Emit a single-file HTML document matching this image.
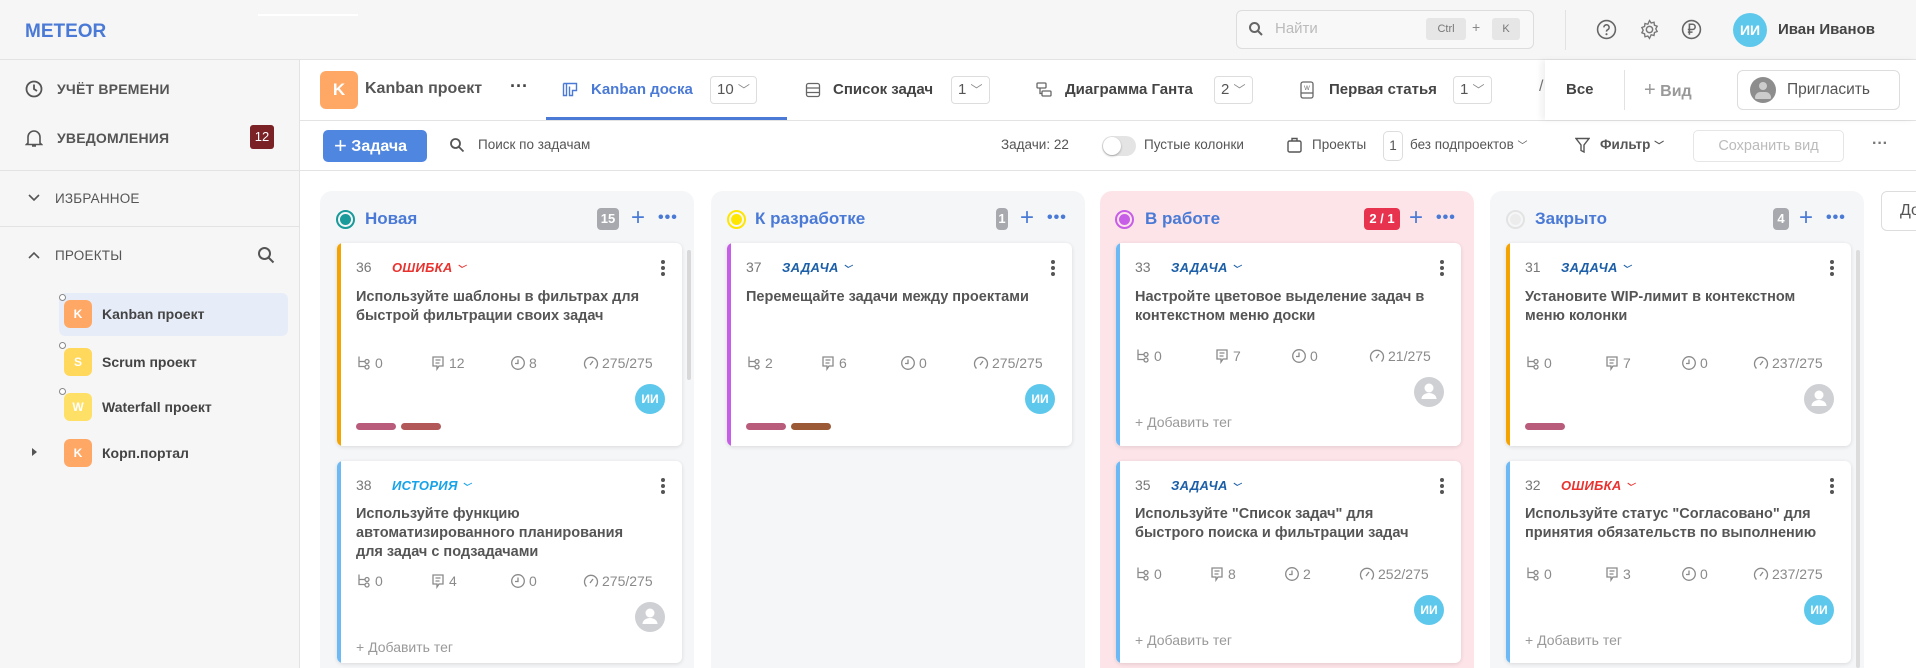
<!DOCTYPE html>
<html><head><meta charset="utf-8"><style>
*{box-sizing:border-box;margin:0;padding:0}
body{width:1916px;height:668px;overflow:hidden;background:#fff;font-family:"Liberation Sans","Noto Sans CJK SC",sans-serif;color:#555;position:relative}
.a{position:absolute}
.top{left:0;top:0;width:1916px;height:60px;background:#f6f6f6;border-bottom:1px solid #e3e3e3}
.side{left:0;top:60px;width:300px;height:608px;background:#f6f6f6;border-right:1px solid #e3e3e3}
.si{font-size:14px;color:#555;font-weight:bold;letter-spacing:.2px}
.pi{font-size:14px;color:#444;font-weight:bold}
.pav{width:28px;height:28px;border-radius:6px;color:#fff;font-size:12px;font-weight:bold;text-align:center;line-height:28px}
.col{top:191px;width:374px;height:477px;border-radius:12px 12px 0 0;background:#f5f6f8}
.card{background:#fff;border-radius:6px;box-shadow:0 1px 4px rgba(0,0,0,.12);width:345px;overflow:hidden}
.card .bar{left:0;top:0;width:4px;height:100%}
.id{font-size:14px;color:#777;left:19px}
.typ{font-size:13px;font-style:italic;font-weight:bold;letter-spacing:.3px}
.ttl{left:19px;width:290px;font-size:14.5px;line-height:19px;color:#555;font-weight:bold}
.st{font-size:14px;color:#8a8a8a;display:flex;align-items:center;gap:3px}
.st svg{width:16px;height:16px}
.av{width:30px;height:30px;border-radius:50%;background:#5ec8ec;color:#fff;font-weight:bold;font-size:12px;text-align:center;line-height:30px;left:298px}
.av.g{background:#cfd0d4}
.tag{height:7px;width:40px;border-radius:4px;top:0}
.add{left:19px;font-size:14px;color:#999}
.keb{left:324px;width:4px}
.keb i{display:block;width:4px;height:4px;border-radius:50%;background:#555;margin-bottom:2px}
.hd{font-size:17px;font-weight:bold;color:#4a7ad6}
.cnt{height:22px;border-radius:4px;color:#fff;font-size:13px;font-weight:bold;text-align:center;line-height:22px;background:#a7a9ae}
.plus{font-size:24px;color:#4a7ad6;line-height:22px}
.dots{font-size:16px;color:#4a7ad6;font-weight:bold;letter-spacing:1px}
.tab{font-size:15px;color:#444;font-weight:bold}
.cb{border:1px solid #ddd;border-radius:4px;height:28px;font-size:15px;color:#555;padding:0 6px;line-height:26px}
.tb{font-size:13.5px;color:#555}
</style></head><body>
<div class="a top"></div>
<div class="a" style="left:258px;top:14px;width:100px;height:2px;background:#fff"></div>
<div class="a" style="left:25px;top:21px;font-size:19px;font-weight:bold;color:#4a7ad6">METEOR</div>
<div class="a" style="left:1236px;top:10px;width:298px;height:39px;border:1px solid #ddd;border-radius:6px;background:#f8f8f8"></div>
<svg class="a" style="left:1248px;top:21px" width="16" height="16" viewBox="0 0 16 16"><circle cx="6.5" cy="6.5" r="4.5" fill="none" stroke="#666" stroke-width="2"/><path d="M10 10l4 4" stroke="#666" stroke-width="2"/></svg>
<div class="a" style="left:1275px;top:20px;font-size:15px;color:#bbb">Найти</div>
<div class="a" style="left:1426px;top:18px;width:40px;height:22px;background:#e6e6e6;border-radius:3px;font-size:11px;color:#777;text-align:center;line-height:22px">Ctrl</div>
<div class="a" style="left:1472px;top:19px;font-size:14px;color:#888">+</div>
<div class="a" style="left:1492px;top:18px;width:28px;height:22px;background:#e6e6e6;border-radius:3px;font-size:11px;color:#777;text-align:center;line-height:22px">K</div>
<div class="a" style="left:1565px;top:10px;width:1px;height:40px;background:#e2e2e2"></div>
<svg class="a" style="left:1596px;top:19px" width="21" height="21" viewBox="0 0 20 20"><circle cx="10" cy="10" r="8.5" fill="none" stroke="#666" stroke-width="1.5"/><path d="M7.5 8a2.5 2.5 0 1 1 3.5 2.3c-.8.4-1 1-1 1.7" fill="none" stroke="#666" stroke-width="1.5"/><circle cx="10" cy="14.5" r="1" fill="#666"/></svg>
<svg class="a" style="left:1639px;top:19px" width="21" height="21" viewBox="0 0 20 20"><circle cx="10" cy="10" r="3" fill="none" stroke="#777" stroke-width="1.4"/><path d="M10 1.5l1.6 2.3 2.7-.7.4 2.8 2.6 1-1.3 2.5 1.3 2.5-2.6 1-.4 2.8-2.7-.7L10 18.5l-1.6-2.3-2.7.7-.4-2.8-2.6-1L4 10.6 2.7 8.1l2.6-1 .4-2.8 2.7.7z" fill="none" stroke="#777" stroke-width="1.3"/></svg>
<svg class="a" style="left:1681px;top:19px" width="21" height="21" viewBox="0 0 20 20"><circle cx="10" cy="10" r="8.5" fill="none" stroke="#666" stroke-width="1.5"/><path d="M8 15V5h3a2.5 2.5 0 0 1 0 5H6.5M6.5 12.5H11" fill="none" stroke="#666" stroke-width="1.5"/></svg>
<div class="a" style="left:1733px;top:13px;width:34px;height:34px;border-radius:50%;background:#5ec8ec;color:#fff;font-weight:bold;font-size:14px;text-align:center;line-height:34px">ИИ</div>
<div class="a" style="left:1778px;top:21px;font-size:15px;font-weight:bold;color:#444">Иван Иванов</div>

<div class="a side"></div>
<svg class="a" style="left:25px;top:80px" width="18" height="18" viewBox="0 0 18 18"><circle cx="9" cy="9" r="7.5" fill="none" stroke="#555" stroke-width="1.8"/><path d="M9 4.5V9l3 2" fill="none" stroke="#555" stroke-width="1.8"/></svg>
<div class="a si" style="left:57px;top:81px">УЧЁТ ВРЕМЕНИ</div>
<svg class="a" style="left:25px;top:128px" width="18" height="20" viewBox="0 0 18 20"><path d="M3 15V9a6 6 0 0 1 12 0v6l1.5 1.5h-15z M7 18h4" fill="none" stroke="#555" stroke-width="1.6"/></svg>
<div class="a si" style="left:57px;top:130px">УВЕДОМЛЕНИЯ</div>
<div class="a" style="left:250px;top:125px;width:24px;height:24px;background:#7b2226;border-radius:3px;color:#fff;font-size:13px;text-align:center;line-height:24px">12</div>
<div class="a" style="left:0;top:170px;width:300px;height:1px;background:#e3e3e3"></div>
<svg class="a" style="left:28px;top:193px" width="12" height="10" viewBox="0 0 12 10"><path d="M1 2l5 5 5-5" fill="none" stroke="#555" stroke-width="1.6"/></svg>
<div class="a si" style="left:55px;top:191px;font-weight:normal;font-size:13.5px">ИЗБРАННОЕ</div>
<div class="a" style="left:0;top:226px;width:300px;height:1px;background:#e3e3e3"></div>
<svg class="a" style="left:28px;top:250px" width="12" height="10" viewBox="0 0 12 10"><path d="M1 8l5-5 5 5" fill="none" stroke="#555" stroke-width="1.6"/></svg>
<div class="a si" style="left:55px;top:248px;font-weight:normal;font-size:13.5px">ПРОЕКТЫ</div>
<svg class="a" style="left:257px;top:246px" width="18" height="18" viewBox="0 0 18 18"><circle cx="7.5" cy="7.5" r="5.5" fill="none" stroke="#555" stroke-width="2"/><path d="M11.5 11.5l5 5" stroke="#555" stroke-width="2"/></svg>
<div class="a" style="left:59px;top:293px;width:229px;height:43px;background:#e7edf8;border-radius:6px"></div>
<div class="a pav" style="left:64px;top:300px;background:#ffa866">K</div><div class="a" style="left:59px;top:294px;width:7px;height:7px;border:1px solid #888;border-radius:50%;background:#fff"></div>
<div class="a pi" style="left:102px;top:306px">Kanban проект</div>
<div class="a pav" style="left:64px;top:348px;background:#ffd85c">S</div><div class="a" style="left:59px;top:342px;width:7px;height:7px;border:1px solid #888;border-radius:50%;background:#fff"></div>
<div class="a pi" style="left:102px;top:354px">Scrum проект</div>
<div class="a pav" style="left:64px;top:393px;background:#ffe066">W</div><div class="a" style="left:59px;top:388px;width:7px;height:7px;border:1px solid #888;border-radius:50%;background:#fff"></div>
<div class="a pi" style="left:102px;top:399px">Waterfall проект</div>
<div class="a" style="left:32px;top:448px;width:0;height:0;border-left:5px solid #555;border-top:4px solid transparent;border-bottom:4px solid transparent"></div>
<div class="a pav" style="left:64px;top:439px;background:#ffa866">K</div>
<div class="a pi" style="left:102px;top:445px">Корп.портал</div>

<div class="a" style="left:300px;top:120px;width:1616px;height:1px;background:#e3e3e3"></div>
<div class="a" style="left:320px;top:71px;width:38px;height:38px;border-radius:6px;background:#ffa866;color:#fff;font-weight:bold;font-size:17px;text-align:center;line-height:38px">K</div>
<div class="a tab" style="left:365px;top:80px;font-size:16px;color:#555">Kanban проект</div>
<div class="a" style="left:510px;top:76px;font-size:18px;font-weight:bold;color:#444">···</div>
<svg class="a" style="left:562px;top:82px" width="16" height="16" viewBox="0 0 16 16"><path d="M1.5 1.5h13v7h-4v5h-3v-9M1.5 1.5v12h3v-12" fill="none" stroke="#4a7ad6" stroke-width="1.4"/></svg>
<div class="a tab" style="left:591px;top:81px;color:#4a7ad6">Kanban доска</div>
<div class="a cb" style="left:710px;top:76px">10 <span style="color:#888;font-size:12px">﹀</span></div>
<div class="a" style="left:546px;top:117px;width:241px;height:3px;background:#4a7ad6"></div>
<svg class="a" style="left:805px;top:82px" width="16" height="16" viewBox="0 0 16 16"><rect x="1.5" y="1.5" width="13" height="13" rx="2" fill="none" stroke="#666" stroke-width="1.3"/><path d="M1.5 6h13M1.5 10.5h13" stroke="#666" stroke-width="1.3"/></svg>
<div class="a tab" style="left:833px;top:81px">Список задач</div>
<div class="a cb" style="left:951px;top:76px">1 <span style="color:#888;font-size:12px">﹀</span></div>
<svg class="a" style="left:1036px;top:82px" width="17" height="16" viewBox="0 0 17 16"><rect x="1" y="1" width="9" height="5" rx="1" fill="none" stroke="#666" stroke-width="1.3"/><rect x="6" y="9" width="9" height="5" rx="1" fill="none" stroke="#666" stroke-width="1.3"/><path d="M4 6v5.5h2" fill="none" stroke="#666" stroke-width="1.3"/></svg>
<div class="a tab" style="left:1065px;top:81px">Диаграмма Ганта</div>
<div class="a cb" style="left:1214px;top:76px">2 <span style="color:#888;font-size:12px">﹀</span></div>
<svg class="a" style="left:1300px;top:81px" width="14" height="18" viewBox="0 0 14 18"><rect x="1" y="1" width="12" height="16" rx="2" fill="none" stroke="#666" stroke-width="1.3"/><path d="M1 12h12" stroke="#666" stroke-width="1.3"/><text x="7" y="9" font-size="6" text-anchor="middle" fill="#666">W</text></svg>
<div class="a tab" style="left:1329px;top:81px">Первая статья</div>
<div class="a cb" style="left:1453px;top:76px">1 <span style="color:#888;font-size:12px">﹀</span></div>
<div class="a" style="left:1539px;top:78px;font-size:16px;color:#777">/</div>
<div class="a" style="left:1545px;top:60px;width:371px;height:60px;background:#fff;box-shadow:-4px 0 6px rgba(0,0,0,.06)"></div>
<div class="a tab" style="left:1566px;top:81px">Все</div>
<div class="a" style="left:1624px;top:70px;width:1px;height:40px;background:#e2e2e2"></div>
<div class="a tab" style="left:1644px;top:79px;color:#999;font-size:16px"><span style="font-size:20px;font-weight:normal">+</span> Вид</div>
<div class="a" style="left:1737px;top:70px;width:163px;height:40px;border:1px solid #ddd;border-radius:6px"></div>
<div class="a" style="left:1750px;top:77px;width:26px;height:26px;border-radius:50%;background:#8d8d8d"></div>
<div class="a" style="left:1759px;top:82px;width:8px;height:8px;border-radius:50%;background:#ccc"></div>
<div class="a" style="left:1755px;top:92px;width:16px;height:7px;border-radius:8px 8px 2px 2px;background:#ccc"></div>
<div class="a" style="left:1787px;top:81px;font-size:15.5px;color:#555">Пригласить</div>

<div class="a" style="left:300px;top:170px;width:1616px;height:1px;background:#e3e3e3"></div>
<div class="a" style="left:323px;top:130px;width:104px;height:32px;background:#4f86e0;border-radius:5px;color:#fff;font-weight:bold;font-size:16px;line-height:32px;padding-left:11px"><span style="font-size:22px;font-weight:normal;vertical-align:-2px">+</span> Задача</div>
<svg class="a" style="left:449px;top:137px" width="16" height="16" viewBox="0 0 16 16"><circle cx="6.5" cy="6.5" r="4.5" fill="none" stroke="#555" stroke-width="1.8"/><path d="M10 10l4.5 4.5" stroke="#555" stroke-width="1.8"/></svg>
<div class="a tb" style="left:478px;top:137px">Поиск по задачам</div>
<div class="a tb" style="left:1001px;top:137px">Задачи: 22</div>
<div class="a" style="left:1102px;top:136px;width:34px;height:20px;border-radius:10px;background:#e4e4e4"></div>
<div class="a" style="left:1103px;top:137px;width:18px;height:18px;border-radius:50%;background:#fff;box-shadow:0 1px 2px rgba(0,0,0,.3)"></div>
<div class="a tb" style="left:1144px;top:137px">Пустые колонки</div>
<svg class="a" style="left:1287px;top:137px" width="15" height="16" viewBox="0 0 15 16"><rect x="1" y="4" width="13" height="11" rx="1.5" fill="none" stroke="#555" stroke-width="1.4"/><path d="M5 4V1.5h5V4" fill="none" stroke="#555" stroke-width="1.4"/></svg>
<div class="a tb" style="left:1312px;top:137px">Проекты</div>
<div class="a" style="left:1383px;top:131px;width:20px;height:30px;border:1px solid #ddd;border-radius:5px;font-size:13.5px;text-align:center;line-height:28px">1</div>
<div class="a tb" style="left:1410px;top:137px">без подпроектов <span style="font-size:10px">﹀</span></div>
<svg class="a" style="left:1575px;top:137px" width="15" height="17" viewBox="0 0 15 17"><path d="M1 1.5h13l-5 6.5v7l-3-1.5V8z" fill="none" stroke="#555" stroke-width="1.4"/></svg>
<div class="a tb" style="left:1600px;top:137px;font-weight:bold">Фильтр <span style="font-size:10px">﹀</span></div>
<div class="a" style="left:1693px;top:130px;width:151px;height:32px;border:1px solid #e6e6e6;border-radius:5px;color:#bbb;font-size:14.5px;text-align:center;line-height:30px">Сохранить вид</div>
<div class="a" style="left:1872px;top:135px;font-size:16px;color:#777;font-weight:bold">···</div>

<div class="a col" style="left:320px"></div>
<div class="a col" style="left:711px"></div>
<div class="a col" style="left:1100px;background:#fde4e8"></div>
<div class="a col" style="left:1490px"></div>
<div class="a" style="left:1881px;top:191px;width:50px;height:40px;border:1px solid #ddd;border-radius:6px;background:#fff"></div>
<div class="a" style="left:1900px;top:202px;font-size:16px;color:#555">До</div>

<div class="a" style="left:336px;top:210px;width:19px;height:19px;border-radius:50%;border:2px solid #1a9a9a"><div style="margin:2px;width:11px;height:11px;border-radius:50%;background:#1a9a9a"></div></div>
<div class="a hd" style="left:365px;top:209px">Новая</div>
<div class="a cnt" style="left:597px;top:208px;width:22px">15</div>
<div class="a plus" style="left:631px;top:207px">+</div>
<div class="a dots" style="left:658px;top:209px">•••</div>

<div class="a" style="left:727px;top:210px;width:19px;height:19px;border-radius:50%;border:2px solid #ffe600"><div style="margin:2px;width:11px;height:11px;border-radius:50%;background:#ffe600"></div></div>
<div class="a hd" style="left:755px;top:209px">К разработке</div>
<div class="a cnt" style="left:996px;top:208px;width:12px">1</div>
<div class="a plus" style="left:1020px;top:207px">+</div>
<div class="a dots" style="left:1047px;top:209px">•••</div>

<div class="a" style="left:1115px;top:210px;width:19px;height:19px;border-radius:50%;border:2px solid #c75ee8"><div style="margin:2px;width:11px;height:11px;border-radius:50%;background:#c75ee8"></div></div>
<div class="a hd" style="left:1145px;top:209px">В работе</div>
<div class="a cnt" style="left:1364px;top:208px;width:36px;background:#e8334f">2 / 1</div>
<div class="a plus" style="left:1409px;top:207px">+</div>
<div class="a dots" style="left:1436px;top:209px">•••</div>

<div class="a" style="left:1506px;top:210px;width:19px;height:19px;border-radius:50%;border:2px solid #e3e3e3"><div style="margin:2px;width:11px;height:11px;border-radius:50%;background:#ececec"></div></div>
<div class="a hd" style="left:1535px;top:209px">Закрыто</div>
<div class="a cnt" style="left:1773px;top:208px;width:16px">4</div>
<div class="a plus" style="left:1799px;top:207px">+</div>
<div class="a dots" style="left:1826px;top:209px">•••</div>

<div class="a" style="left:687px;top:250px;width:4px;height:130px;background:#d8d8d8;border-radius:2px"></div>
<div class="a" style="left:1856px;top:250px;width:4px;height:418px;background:#dcdcdc;border-radius:2px"></div>

<svg width="0" height="0" style="position:absolute">
<defs>
<symbol id="sub" viewBox="0 0 16 16"><path d="M3 1.5v10h6M3 6.5h6" fill="none" stroke="#8a8a8a" stroke-width="1.3"/><circle cx="11" cy="6.5" r="2" fill="none" stroke="#8a8a8a" stroke-width="1.3"/><circle cx="11" cy="12" r="2" fill="none" stroke="#8a8a8a" stroke-width="1.3"/></symbol>
<symbol id="com" viewBox="0 0 16 16"><path d="M3 2h10v9H9l-2 3v-3H3z" fill="none" stroke="#8a8a8a" stroke-width="1.3"/><path d="M5.5 5h5M5.5 8h4" stroke="#8a8a8a" stroke-width="1.2"/></symbol>
<symbol id="clk" viewBox="0 0 16 16"><circle cx="8" cy="8" r="6.3" fill="none" stroke="#8a8a8a" stroke-width="1.3"/><path d="M8 4.5V8.5H5" fill="none" stroke="#8a8a8a" stroke-width="1.3"/></symbol>
<symbol id="gau" viewBox="0 0 16 16"><path d="M3.5 13.5A6.5 6.5 0 1 1 12.5 13.5" fill="none" stroke="#8a8a8a" stroke-width="1.3"/><path d="M7 10l3-4" stroke="#8a8a8a" stroke-width="1.3"/></symbol>
<symbol id="usr" viewBox="0 0 30 30"><circle cx="15" cy="11" r="4.5" fill="#fff"/><path d="M7.5 22a7.5 6 0 0 1 15 0z" fill="#fff"/></symbol>
</defs></svg>

<div class="a card" style="left:337px;top:243px;height:203px">
 <div class="a bar" style="background:#f5a300"></div>
 <div class="a id" style="top:16px">36</div>
 <div class="a typ" style="left:55px;top:17px;color:#e8332f">ОШИБКА <span style="font-size:9px">﹀</span></div>
 <div class="a keb" style="top:17px"><i></i><i></i><i></i></div>
 <div class="a ttl" style="top:45px">Используйте шаблоны в фильтрах для быстрой фильтрации своих задач</div>
 <div class="a st" style="left:19px;top:112px"><svg><use href="#sub"/></svg>0</div>
 <div class="a st" style="left:93px;top:112px"><svg><use href="#com"/></svg>12</div>
 <div class="a st" style="left:173px;top:112px"><svg><use href="#clk"/></svg>8</div>
 <div class="a st" style="left:246px;top:112px"><svg><use href="#gau"/></svg>275/275</div>
 <div class="a av" style="top:141px">ИИ</div>
 <div class="a tag" style="left:19px;top:180px;background:#b95c7c"></div>
 <div class="a tag" style="left:64px;top:180px;background:#b35858"></div>
</div>
<div class="a card" style="left:337px;top:461px;height:202px">
 <div class="a bar" style="background:#6cb9f5"></div>
 <div class="a id" style="top:16px">38</div>
 <div class="a typ" style="left:55px;top:17px;color:#16a3e8">ИСТОРИЯ <span style="font-size:9px">﹀</span></div>
 <div class="a keb" style="top:17px"><i></i><i></i><i></i></div>
 <div class="a ttl" style="top:44px">Используйте функцию автоматизированного планирования для задач с подзадачами</div>
 <div class="a st" style="left:19px;top:112px"><svg><use href="#sub"/></svg>0</div>
 <div class="a st" style="left:93px;top:112px"><svg><use href="#com"/></svg>4</div>
 <div class="a st" style="left:173px;top:112px"><svg><use href="#clk"/></svg>0</div>
 <div class="a st" style="left:246px;top:112px"><svg><use href="#gau"/></svg>275/275</div>
 <div class="a av g" style="top:141px"><svg width="30" height="30"><use href="#usr"/></svg></div>
 <div class="a add" style="top:178px">+ Добавить тег</div>
</div>
<div class="a card" style="left:727px;top:243px;height:203px">
 <div class="a bar" style="background:#c75ee8"></div>
 <div class="a id" style="top:16px">37</div>
 <div class="a typ" style="left:55px;top:17px;color:#1c5fa8">ЗАДАЧА <span style="font-size:9px">﹀</span></div>
 <div class="a keb" style="top:17px"><i></i><i></i><i></i></div>
 <div class="a ttl" style="top:45px;width:310px">Перемещайте задачи между проектами</div>
 <div class="a st" style="left:19px;top:112px"><svg><use href="#sub"/></svg>2</div>
 <div class="a st" style="left:93px;top:112px"><svg><use href="#com"/></svg>6</div>
 <div class="a st" style="left:173px;top:112px"><svg><use href="#clk"/></svg>0</div>
 <div class="a st" style="left:246px;top:112px"><svg><use href="#gau"/></svg>275/275</div>
 <div class="a av" style="top:141px">ИИ</div>
 <div class="a tag" style="left:19px;top:180px;background:#b95c7c"></div>
 <div class="a tag" style="left:64px;top:180px;background:#9b5a35"></div>
</div>
<div class="a card" style="left:1116px;top:243px;height:203px">
 <div class="a bar" style="background:#6cb9f5"></div>
 <div class="a id" style="top:16px">33</div>
 <div class="a typ" style="left:55px;top:17px;color:#1c5fa8">ЗАДАЧА <span style="font-size:9px">﹀</span></div>
 <div class="a keb" style="top:17px"><i></i><i></i><i></i></div>
 <div class="a ttl" style="top:45px">Настройте цветовое выделение задач в контекстном меню доски</div>
 <div class="a st" style="left:19px;top:105px"><svg><use href="#sub"/></svg>0</div>
 <div class="a st" style="left:98px;top:105px"><svg><use href="#com"/></svg>7</div>
 <div class="a st" style="left:175px;top:105px"><svg><use href="#clk"/></svg>0</div>
 <div class="a st" style="left:253px;top:105px"><svg><use href="#gau"/></svg>21/275</div>
 <div class="a av g" style="top:134px"><svg width="30" height="30"><use href="#usr"/></svg></div>
 <div class="a add" style="top:171px">+ Добавить тег</div>
</div>
<div class="a card" style="left:1116px;top:461px;height:202px">
 <div class="a bar" style="background:#6cb9f5"></div>
 <div class="a id" style="top:16px">35</div>
 <div class="a typ" style="left:55px;top:17px;color:#1c5fa8">ЗАДАЧА <span style="font-size:9px">﹀</span></div>
 <div class="a keb" style="top:17px"><i></i><i></i><i></i></div>
 <div class="a ttl" style="top:44px">Используйте "Список задач" для быстрого поиска и фильтрации задач</div>
 <div class="a st" style="left:19px;top:105px"><svg><use href="#sub"/></svg>0</div>
 <div class="a st" style="left:93px;top:105px"><svg><use href="#com"/></svg>8</div>
 <div class="a st" style="left:168px;top:105px"><svg><use href="#clk"/></svg>2</div>
 <div class="a st" style="left:243px;top:105px"><svg><use href="#gau"/></svg>252/275</div>
 <div class="a av" style="top:134px">ИИ</div>
 <div class="a add" style="top:171px">+ Добавить тег</div>
</div>
<div class="a card" style="left:1506px;top:243px;height:203px">
 <div class="a bar" style="background:#f5a300"></div>
 <div class="a id" style="top:16px">31</div>
 <div class="a typ" style="left:55px;top:17px;color:#1c5fa8">ЗАДАЧА <span style="font-size:9px">﹀</span></div>
 <div class="a keb" style="top:17px"><i></i><i></i><i></i></div>
 <div class="a ttl" style="top:45px">Установите WIP-лимит в контекстном меню колонки</div>
 <div class="a st" style="left:19px;top:112px"><svg><use href="#sub"/></svg>0</div>
 <div class="a st" style="left:98px;top:112px"><svg><use href="#com"/></svg>7</div>
 <div class="a st" style="left:175px;top:112px"><svg><use href="#clk"/></svg>0</div>
 <div class="a st" style="left:247px;top:112px"><svg><use href="#gau"/></svg>237/275</div>
 <div class="a av g" style="top:141px"><svg width="30" height="30"><use href="#usr"/></svg></div>
 <div class="a tag" style="left:19px;top:180px;background:#b95c7c"></div>
</div>
<div class="a card" style="left:1506px;top:461px;height:202px">
 <div class="a bar" style="background:#6cb9f5"></div>
 <div class="a id" style="top:16px">32</div>
 <div class="a typ" style="left:55px;top:17px;color:#e8332f">ОШИБКА <span style="font-size:9px">﹀</span></div>
 <div class="a keb" style="top:17px"><i></i><i></i><i></i></div>
 <div class="a ttl" style="top:44px;width:300px">Используйте статус "Согласовано" для принятия обязательств по выполнению</div>
 <div class="a st" style="left:19px;top:105px"><svg><use href="#sub"/></svg>0</div>
 <div class="a st" style="left:98px;top:105px"><svg><use href="#com"/></svg>3</div>
 <div class="a st" style="left:175px;top:105px"><svg><use href="#clk"/></svg>0</div>
 <div class="a st" style="left:247px;top:105px"><svg><use href="#gau"/></svg>237/275</div>
 <div class="a av" style="top:134px">ИИ</div>
 <div class="a add" style="top:171px">+ Добавить тег</div>
</div>
</body></html>
